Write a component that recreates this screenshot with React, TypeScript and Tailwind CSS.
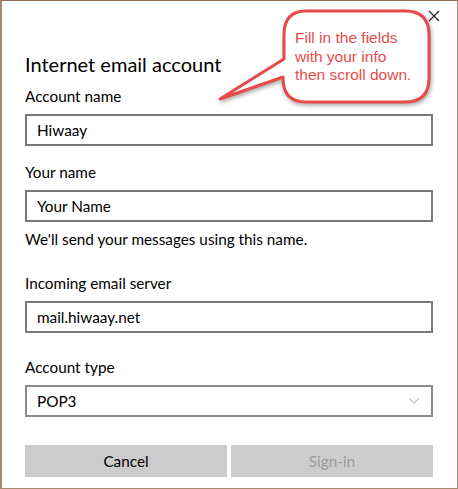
import { ChevronDown } from "lucide-react";

const font = { fontFamily: 'Lato, "Noto Sans", sans-serif' };

function Field({ label, value, top }: { label: string; value: string; top: string }) {
  return (
    <div className={top}>
      <div className="text-[15.3px] leading-[20px] text-black">{label}</div>
      <div className="mt-[8px] flex h-[32px] items-center border-2 border-[#7a7a7a] px-[10px] text-[15.3px] text-black">
        {value}
      </div>
    </div>
  );
}

function Callout() {
  return (
    <div className="pointer-events-none absolute left-[200px] top-0 h-[120px] w-[240px]">
      <svg width="240" height="120" viewBox="200 0 240 120" className="absolute left-0 top-0 drop-shadow-[1px_2px_2px_rgba(0,0,0,0.35)]">
        <path
          d="M304 10 H403 Q427 10 427 34 V77 Q427 101 403 101 H304 Q281 101 281 77 V76 L218 98 L282 58 V34 Q282 10 304 10 Z"
          fill="#ffffff"
          stroke="#e84a4a"
          strokeWidth="3"
          strokeLinejoin="round"
        />
      </svg>
      <div
        className="absolute left-[93px] top-[28px] text-[15.5px] leading-[18.5px] text-[#e94b4b]"
        style={{ fontFamily: '"Liberation Sans", Arial, sans-serif' }}
      >
        Fill in the fields
        <br />
        with your info
        <br />
        then scroll down.
      </div>
    </div>
  );
}

export default function App() {
  return (
    <div
      className="relative h-[489px] w-[458px] overflow-hidden border border-l-2 border-[#a58a72] border-t-[#956f52] bg-white pl-[23px] pr-[24px]"
      style={font}
    >
      {/* Close */}
      <div className="absolute right-[17px] top-[9px]">
        <svg width="12" height="12" viewBox="0 0 12 12">
          <path d="M1 1 L11 11 M11 1 L1 11" stroke="#222" strokeWidth="1.2" />
        </svg>
      </div>

      <Callout />

      <h1 className="mt-[49px] text-[20px] font-normal leading-[28px] text-black">Internet email account</h1>

      <Field top="mt-[8px]" label="Account name" value="Hiwaay" />
      <Field top="mt-[16px]" label="Your name" value="Your Name" />
      <div className="mt-[7px] text-[15.3px] leading-[20px] text-black">We'll send your messages using this name.</div>
      <Field top="mt-[24px]" label="Incoming email server" value="mail.hiwaay.net" />

      <div className="mt-[24px]">
        <div className="text-[15.3px] leading-[20px] text-black">Account type</div>
        <div className="mt-[8px] flex h-[32px] items-center justify-between border-2 border-[#8a8a8a] pl-[10px] pr-[8px] text-[15.3px] text-black">
          <span>POP3</span>
          <ChevronDown size={18} strokeWidth={1} color="#7a7a7a" />
        </div>
      </div>

      <div className="mt-[28px] flex gap-[4px]">
        <button className="h-[32px] flex-1 bg-[#cccccc] text-[15.3px] text-black">Cancel</button>
        <button className="h-[32px] flex-1 bg-[#cccccc] text-[15.3px] text-[#9a9a9a]">Sign-in</button>
      </div>
    </div>
  );
}
